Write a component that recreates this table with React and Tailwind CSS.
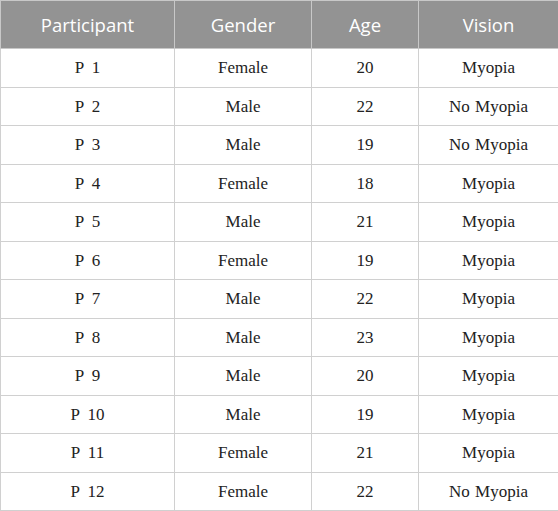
const rows = [
  ["P 1", "Female", "20", "Myopia"],
  ["P 2", "Male", "22", "No Myopia"],
  ["P 3", "Male", "19", "No Myopia"],
  ["P 4", "Female", "18", "Myopia"],
  ["P 5", "Male", "21", "Myopia"],
  ["P 6", "Female", "19", "Myopia"],
  ["P 7", "Male", "22", "Myopia"],
  ["P 8", "Male", "23", "Myopia"],
  ["P 9", "Male", "20", "Myopia"],
  ["P 10", "Male", "19", "Myopia"],
  ["P 11", "Female", "21", "Myopia"],
  ["P 12", "Female", "22", "No Myopia"],
];

const headers = ["Participant", "Gender", "Age", "Vision"];

export default function App() {
  return (
    <div className="w-[558px] h-[511px] bg-white">
      <table className="w-[558px] border-collapse table-fixed">
        <colgroup>
          <col className="w-[174px]" />
          <col className="w-[137px]" />
          <col className="w-[107px]" />
          <col className="w-[140px]" />
        </colgroup>
        <thead>
          <tr className="h-[48px] bg-[#939393]">
            {headers.map((h) => (
              <th
                key={h}
                className="border border-[#c8c8c8] text-white font-normal text-[18.5px] font-['Open_Sans',sans-serif] text-center align-middle"
              >
                {h}
              </th>
            ))}
          </tr>
        </thead>
        <tbody>
          {rows.map((r, i) => (
            <tr key={i} className="h-[38.5px]">
              {r.map((c, j) => (
                <td
                  key={j}
                  className={
                    "border border-[#d0d0d0] text-[#222] text-[17px] font-['Liberation_Serif',serif] text-center align-middle " +
                    (j === 0 ? "[word-spacing:4px]" : "[word-spacing:1px]")
                  }
                >
                  {c}
                </td>
              ))}
            </tr>
          ))}
        </tbody>
      </table>
    </div>
  );
}
